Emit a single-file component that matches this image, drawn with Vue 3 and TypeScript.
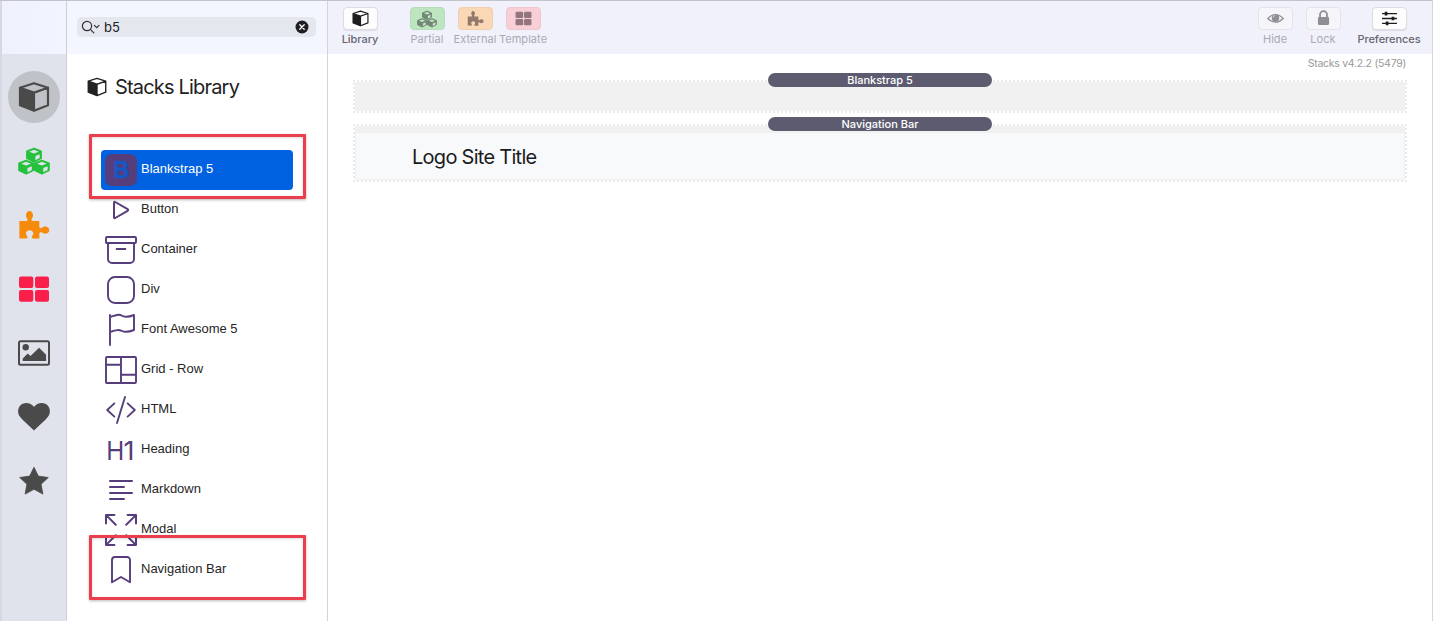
<script setup lang="ts">
import { h, type FunctionalComponent } from 'vue'

interface Shape { tag: string; [attr: string]: string | number }
interface ToolItem { label: string; icon: string; tone: string }

const path = (d: string): Shape => ({ tag: 'path', d })
const line = (d: string, width = 1): Shape => ({
  tag: 'path', d, fill: 'none', stroke: 'currentColor', 'stroke-width': width,
  'stroke-linecap': 'round', 'stroke-linejoin': 'round',
})

/* One small isometric cube with a hexagonal outline, centred on (x, y) */
const miniCube = (x: number, y: number): Shape[] => [
  { tag: 'path', d: `M${x} ${y - 6.6}l7.1 2.9v6.9l-7.100 3.600-7.100-3.600v-6.900z`, fill: 'currentColor', stroke: 'currentColor', 'stroke-width': 1.6, 'stroke-linejoin': 'round' },
  { tag: 'path', d: `M${x} ${y - 5.2}l4.800 1.900-4.800 1.900-4.800-1.900z`, class: 'face' },
  { tag: 'path', d: `M${x + 1.4} ${y + 1}l4.300-1.800v3.900l-4.300 2.200z`, class: 'face' },
]

const icons: Record<string, { size: number; shapes: Shape[] }> = {
  cube: { size: 32, shapes: [
    path('M2 6.700l14 4.900V30L2 24.200z'),
    line('M16 2.200L30 6.700v17.500l-14 5.600-14-5.600V6.700zM2 6.700l14 4.900 14-4.900M16 11.600v18', 2.2),
  ] },
  cubes: { size: 32, shapes: [...miniCube(16, 10), ...miniCube(8.1, 22), ...miniCube(23.9, 22)] },
  puzzle: { size: 32, shapes: [
    { tag: 'path', transform: 'translate(0 1)', d: 'M1.4 11h6.8c1.6 0 1.8-1.2.9-2.5A3.7 3.7 0 0 1 8 5.3C8 3 9.6 1 11.5 1S15 3 15 5.3c0 1.3-.5 2.2-1.1 3.2-.8 1.3-.5 2.5 1 2.5h6.4v5.6c0 1.6 1.2 2 2.7 1.1 1-.6 1.8-1.1 3-1.1 2.4 0 4.3 1.5 4.3 3.6s-1.9 3.600-4.3 3.6c-1.2 0-2-.5-3-1.2-1.5-.9-2.7-.4-2.7 1.1 0 1.500.1 3 .3 4.500-2 .4-4.100.5-6.400.4-1.500-.1-1.900-1.200-1-2.500.6-1 1.100-1.700 1.100-2.800 0-1.700-1.400-3.100-3.600-3.100s-3.800 1.400-3.800 3.100c0 1.100.6 1.900 1.200 2.800.9 1.400.3 2.300-1.100 2.300H1.400z' },
  ] },
  tiles: { size: 32, shapes: [
    { tag: 'rect', x: 1, y: 3.5, width: 14.3, height: 11.5, rx: 2 },
    { tag: 'rect', x: 17, y: 3.5, width: 14, height: 11.5, rx: 2 },
    { tag: 'rect', x: 1, y: 17, width: 14.3, height: 11.8, rx: 2 },
    { tag: 'rect', x: 17, y: 17, width: 14, height: 11.8, rx: 2 },
  ] },
  image: { size: 32, shapes: [
    { tag: 'rect', x: 1, y: 4.2, width: 30, height: 23.6, rx: 1.5, fill: 'none', stroke: 'currentColor', 'stroke-width': 2 },
    { tag: 'circle', cx: 7.7, cy: 10.3, r: 3.2 },
    path('M4.7 24v-2.6l5-5 2.8 2.7 8.6-8.4 7 7V24z'),
  ] },
  heart: { size: 32, shapes: [path('M16 29.6C10.5 24.2 5.6 20 2.4 16.3-.4 13-.7 8 1.9 4.9 5.3 1 11.7 1.2 15.200 5l.8.9.8-.9c3.500-3.800 9.900-4 13.300-.1 2.600 3.100 2.300 8.100-.5 11.400C26.400 20 21.500 24.200 16 29.600z')] },
  star: { size: 32, shapes: [{ tag: 'path', d: 'M16 2.200l4.300 8.900 10 1.400-7.200 6.700 1.800 9.900L16 24.300l-8.900 4.800 1.800-9.900-7.200-6.700 10-1.400z', stroke: 'currentColor', 'stroke-width': 0.8, 'stroke-linejoin': 'round' }] },
  play: { size: 16, shapes: [line('M4.500 4.300v7.400c0 .3.300.5.600.3l6.200-3.600c.300-.2.300-.600 0-.8L5.100 4c-.3-.2-.6 0-.6.300z')] },
  archive: { size: 16, shapes: [line('M1 1.500h14q.5 0 .5.500v2q0 .5-.5.500H1q-.5 0-.5-.5V2q0-.5.500-.5zM1.500 4.500v8a2 2 0 0 0 2 2h9a2 2 0 0 0 2-2v-8M5.800 7.500h4.400', 0.95)] },
  square: { size: 16, shapes: [{ tag: 'rect', x: 1.5, y: 1.5, width: 13, height: 13, rx: 3.5, fill: 'none', stroke: 'currentColor', 'stroke-width': 0.95 }] },
  flag: { size: 16, shapes: [line('M2.500.500v15M2.500 1.500C8 -.4 7.500.500 9 1.100s2.500.600 5.500-.6V8c-3 1.200-4.500 1.200-6 .5S6 7.800 2.500 9', 0.95)] },
  columns: { size: 16, shapes: [line('M1 1.500h14q.5 0 .5.500v12q0 .5-.5.500H1q-.5 0-.5-.5V2q0-.5.500-.5zM8 1.500v13M.500 5.400H8M8 10.400h7.500', 0.95)] },
  code: { size: 16, shapes: [line('M4.700 4.700L1.100 8l3.600 3.300M11.300 4.700L14.900 8l-3.600 3.300M10 1.500l-4 13', 0.95)] },
  lines: { size: 16, shapes: [line('M2.500 3.500h11M2.500 6.500h7M2.500 9.500h11M2.500 12.500h7')] },
  expand: { size: 16, shapes: [line('M.500 4.700V.500h4.200M.7.700l4.700 4.700M11.300.500h4.200v4.200M15.300.7l-4.700 4.700M.500 11.300v4.200h4.200M.7 15.300l4.700-4.700M11.300 15.500h4.200v-4.200M15.300 15.300l-4.700-4.700')] },
  bookmark: { size: 16, shapes: [line('M3.500 14.100V3A1.500 1.500 0 0 1 5 1.500h6A1.500 1.500 0 0 1 12.500 3v11.100L8 11.500z', 0.95)] },
  eye: { size: 32, shapes: [
    { tag: 'path', d: 'M1.500 16Q16 1 30.500 16 16 30 1.500 16z', fill: 'none', stroke: 'currentColor', 'stroke-width': 2.2 },
    { tag: 'circle', cx: 16, cy: 15, r: 7 },
    { tag: 'path', d: 'M12 14q0-3 3-4', fill: 'none', stroke: '#eee', 'stroke-width': 1.5 },
  ] },
  lock: { size: 32, shapes: [
    { tag: 'rect', x: 5.500, y: 13, width: 21, height: 15, rx: 2 },
    { tag: 'path', d: 'M9.500 14V8.500a6.500 6.500 0 0 1 13 0V14', fill: 'none', stroke: 'currentColor', 'stroke-width': 3.400 },
  ] },
  sliders: { size: 32, shapes: [
    { tag: 'path', d: 'M2 7h28M2 16h28M2 25h28', fill: 'none', stroke: 'currentColor', 'stroke-width': 2.400 },
    { tag: 'path', d: 'M7 3.500h5v7H7zM20 12.500h5v7h-5zM9 21.500h5v7H9z' },
  ] },
}

const Icon: FunctionalComponent<{ name: string }> = (props) => {
  const icon = icons[props.name]
  return h('svg', { viewBox: `0 0 ${icon.size} ${icon.size}`, fill: 'currentColor' },
    icon.shapes.map(({ tag, ...attrs }) => h(tag, attrs)))
}
Icon.props = ['name']

const rail = [
  { icon: 'cube', tone: 'dark' },
  { icon: 'cubes', tone: 'green' },
  { icon: 'puzzle', tone: 'orange' },
  { icon: 'tiles', tone: 'red' },
  { icon: 'image', tone: 'dark' },
  { icon: 'heart', tone: 'dark' },
  { icon: 'star', tone: 'dark' },
]

const stacks = [
  { label: 'Blankstrap 5', icon: 'B' },
  { label: 'Button', icon: 'play' },
  { label: 'Container', icon: 'archive' },
  { label: 'Div', icon: 'square' },
  { label: 'Font Awesome 5', icon: 'flag' },
  { label: 'Grid - Row', icon: 'columns' },
  { label: 'HTML', icon: 'code' },
  { label: 'Heading', icon: 'H1' },
  { label: 'Markdown', icon: 'lines' },
  { label: 'Modal', icon: 'expand' },
  { label: 'Navigation Bar', icon: 'bookmark' },
]

const leftTools: ToolItem[] = [
  { label: 'Library', icon: 'cube', tone: 'active library' },
  { label: 'Partial', icon: 'cubes', tone: 'partial' },
  { label: 'External', icon: 'puzzle', tone: 'external' },
  { label: 'Template', icon: 'tiles', tone: 'template' },
]
const rightTools: ToolItem[] = [
  { label: 'Hide', icon: 'eye', tone: 'plain' },
  { label: 'Lock', icon: 'lock', tone: 'plain' },
  { label: 'Preferences', icon: 'sliders', tone: 'active prefs' },
]
</script>

<template>
  <div class="window">
    <nav class="rail">
      <div class="rail-top"></div>
      <div v-for="(item, i) in rail" :key="item.icon" class="rail-item">
        <span class="rail-button" :class="[item.tone, { current: i === 0 }]"><Icon :name="item.icon" /></span>
      </div>
    </nav>

    <aside class="sidebar">
      <div class="search-bar">
        <div class="search">
          <svg class="glass" viewBox="0 0 20 14">
            <circle cx="6" cy="6" r="4.600" /><path d="M9.400 9.400l3.400 3.400M13.400 5.400l2.300 2.200 2.300-2.200" />
          </svg>
          <span class="query">b5</span>
          <svg class="clear" viewBox="0 0 14 14"><circle cx="7" cy="7" r="6.500" /><path d="M4.800 4.800l4.400 4.400M9.200 4.800L4.800 9.200" /></svg>
        </div>
      </div>
      <h1 class="title"><Icon name="cube" /><span>Stacks Library</span></h1>
      <ul class="list">
        <li v-for="(item, i) in stacks" :key="item.label" :class="{ selected: i === 0 }">
          <svg v-if="item.icon === 'B'" class="glyph" viewBox="0 0 32 32">
            <rect width="32" height="32" rx="7" fill="#563d7c" />
            <text class="letter-b" x="8.300" y="24.300" textLength="16" lengthAdjust="spacingAndGlyphs">B</text>
          </svg>
          <svg v-else-if="item.icon === 'H1'" class="glyph" viewBox="0 0 32 32">
            <text class="letter-h" x="1.200" y="26" textLength="18" lengthAdjust="spacingAndGlyphs">H</text>
            <text class="letter-h" x="18.500" y="26" textLength="11" lengthAdjust="spacingAndGlyphs">1</text>
          </svg>
          <Icon v-else class="glyph" :name="item.icon" />
          <span class="name">{{ item.label }}</span>
        </li>
      </ul>
      <div class="marker first"></div>
      <div class="marker second"></div>
    </aside>

    <main class="editor">
      <header class="toolbar">
        <div class="tools left">
          <div v-for="tool in leftTools" :key="tool.label" class="tool" :class="tool.tone">
            <span class="tool-button"><Icon :name="tool.icon" /></span>
            <span class="tool-label">{{ tool.label }}</span>
          </div>
        </div>
        <div class="tools right">
          <div v-for="tool in rightTools" :key="tool.label" class="tool" :class="tool.tone">
            <span class="tool-button"><Icon :name="tool.icon" /></span>
            <span class="tool-label">{{ tool.label }}</span>
          </div>
        </div>
      </header>
      <div class="version">Stacks v4.2.2 (5479)</div>
      <section class="stack blank"><span class="pill">Blankstrap 5</span></section>
      <section class="stack navbar">
        <span class="pill">Navigation Bar</span>
        <div class="nav-content">Logo Site Title</div>
      </section>
    </main>
  </div>
</template>

<style>
html, body { margin: 0; overflow: hidden; }
</style>

<style scoped>
.window {
  display: flex; width: 1433px; height: 621px; box-sizing: border-box; overflow: hidden;
  border-top: 1px solid #c3c3cc; border-right: 1px solid #d5d5dc; background: #fff;
  font-family: Inter, "Liberation Sans", sans-serif; color: #222;
}
svg { display: block; overflow: visible; }

.rail { box-sizing: border-box; width: 67px; flex: none; background: #e0e3eb; border-left: 2px solid #d8d8e2; border-right: 1px solid #cdcfd8; }
.rail-top { height: 53px; margin-bottom: 11px; background: linear-gradient(90deg, #eff1fc, #f2f4ff); }
.rail-item { height: 64px; display: flex; align-items: center; justify-content: center; }
.rail-button { width: 52px; height: 52px; border-radius: 50%; display: flex; align-items: center; justify-content: center; --face: #e0e3eb; }
.rail-button svg { width: 32px; height: 32px; }
.current { background: #bfc2c6; }
.dark { color: #4a4a4a; }
.green { color: #25c13c; }
.orange { color: #f68b0b; }
.red { color: #fa1e4b; }
:deep(.face) { fill: var(--face); }

.sidebar { position: relative; box-sizing: border-box; width: 261px; flex: none; border-right: 1px solid #d3d3da; }
.search-bar { height: 53px; box-sizing: border-box; padding: 16px 11px 0 10px; background: #f4f6ff; }
.search { height: 20px; border-radius: 5px; background: #e5e7ef; display: flex; align-items: center; padding: 0 7px 0 4px; }
.glass { width: 20px; height: 14px; fill: none; stroke: #303036; stroke-width: 1.200; stroke-linecap: round; }
.query { margin-left: 3px; font-size: 13px; line-height: 20px; flex: 1; color: #222; }
.clear { width: 14px; height: 14px; fill: #1e1e23; }
.clear path { stroke: #fff; stroke-width: 1.300; stroke-linecap: round; }
.title { margin: 0; height: 66px; display: flex; align-items: center; padding-left: 20px; font-size: 20px; font-weight: 400; letter-spacing: -.82px; }
.title svg { width: 20px; height: 20px; margin-right: 8px; }
.list { list-style: none; margin: 30px 34px 0; padding: 0; }
.list li { height: 40px; box-sizing: border-box; padding-left: 4px; display: flex; align-items: center; border-radius: 4px; color: #563d7c; font-family: "Liberation Sans", Arial, sans-serif; font-size: 13px; }
.list .selected { background: #0061e1; }
.glyph { width: 32px; height: 32px; flex: none; }
.name { margin-left: 4px; padding-bottom: 3px; color: #262626; }
.selected .name { color: #fff; }
.letter-b { font: bold 24px "Liberation Sans", sans-serif; fill: #1756c5; stroke: #1756c5; stroke-width: .6; }
.letter-h { font: 400 26px Inter, sans-serif; fill: #563d7c; }
.marker { position: absolute; left: 21.500px; width: 217.500px; height: 65px; box-sizing: border-box; border: 3px solid #eb3e4c; border-radius: 1px; box-shadow: 0 1px 3px rgba(0, 0, 0, .28), inset 0 1px 3px rgba(0, 0, 0, .15); }
.first { top: 133.400px; }
.second { top: 534.400px; }

.editor { flex: 1; min-width: 0; }
.toolbar { height: 53px; background: #f1f1fc; display: flex; justify-content: space-between; }
.tools { display: flex; padding-top: 6px; }
.left { padding-left: 8px; }
.right { padding-right: 9px; }
.tool { width: 48px; display: flex; flex-direction: column; align-items: center; color: #8e8e93; }
.tool-button { box-sizing: border-box; width: 35px; height: 23px; border: 1px solid #e3e3ea; border-radius: 4px; background: #f6f6fa; display: flex; align-items: center; justify-content: center; --face: #c5e8c9; }
.tool-button svg { width: 17px; height: 17px; }
.tool-label { margin-top: 2px; font-size: 11px; line-height: 15px; white-space: nowrap; color: #a9a9b4; letter-spacing: .05px; }
.active { color: #1d1d1f; }
.active .tool-button { background: #fdfdfd; border-color: #dcdce2; box-shadow: 0 1px 1px rgba(0, 0, 0, .08); }
.active .tool-label { color: #66666f; font-weight: 500; letter-spacing: -.05px; }
.library { margin-right: 19px; }
.prefs { width: 68px; margin-left: 8px; }
.partial { color: #728875; }
.partial .tool-button { background: #bde6c0; border-color: #b5dcb9; }
.partial svg { width: 20px; height: 20px; }
.external { color: #91796c; }
.external .tool-button { background: #fad7b5; border-color: #f0cfaf; }
.template { color: #92767e; }
.template .tool-button { background: #f9cfd7; border-color: #f0c6cf; }

.version { height: 27px; box-sizing: border-box; padding: 3px 26px 0 0; text-align: right; font-size: 10.500px; line-height: 14px; letter-spacing: -.27px; color: #999; }
.stack { position: relative; box-sizing: border-box; margin: -1px 25px 0; border: 2px dotted #ebebeb; background: #f1f1f1 padding-box; }
.blank { height: 33px; }
.navbar { margin-top: 11px; height: 58px; padding: 7px 1px 1px; }
.pill { position: absolute; left: 50%; top: -9px; margin-left: -112px; width: 224px; height: 14px; border-radius: 7px; background: #5c5b70; color: #fff; font-size: 11px; line-height: 14px; font-weight: 500; text-align: center; }
.nav-content { height: 100%; box-sizing: border-box; padding: 1px 0 0 56px; background: #f8f9fb; display: flex; align-items: center; font-size: 20px; letter-spacing: -.72px; color: #1b1b1d; }
</style>
